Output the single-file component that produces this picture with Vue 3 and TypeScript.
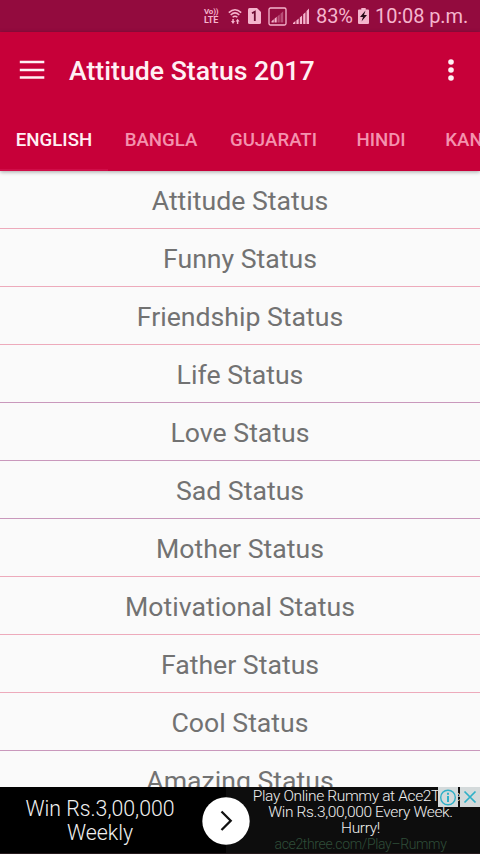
<script setup lang="ts">
interface Row {
  label: string
  tone: 'rose' | 'mauve'
}

const tabs: { label: string; cls: string }[] = [
  { label: 'ENGLISH', cls: 'english' },
  { label: 'BANGLA', cls: 'bangla' },
  { label: 'GUJARATI', cls: 'gujarati' },
  { label: 'HINDI', cls: 'hindi' },
  { label: 'KANNADA', cls: 'kannada' },
]

const rows: Row[] = [
  { label: 'Attitude Status', tone: 'rose' },
  { label: 'Funny Status', tone: 'rose' },
  { label: 'Friendship Status', tone: 'rose' },
  { label: 'Life Status', tone: 'mauve' },
  { label: 'Love Status', tone: 'mauve' },
  { label: 'Sad Status', tone: 'mauve' },
  { label: 'Mother Status', tone: 'rose' },
  { label: 'Motivational Status', tone: 'rose' },
  { label: 'Father Status', tone: 'rose' },
  { label: 'Cool Status', tone: 'mauve' },
  { label: 'Amazing Status', tone: 'rose' },
]
</script>

<template>
  <div class="screen">
    <div class="status-bar">
      <div class="volte"><span class="vo">Vo))</span><span class="lte">LTE</span></div>
      <svg class="wifi" width="14" height="17" viewBox="0 0 14 17" fill="none" stroke="currentColor">
        <path d="M.8 4.600Q7-1.200 13.200 4.600M2.700 7Q7 2.800 11.300 7M4.600 9.300Q7 7.200 9.400 9.300" stroke-width="1.500" />
        <path d="M3 13h1.300v-2h1.500v2H7L5 16zM7.600 13.500L9.600 10.800L11.600 13.500H10.300V16H8.900V13.500z" fill="currentColor" stroke="none" />
      </svg>
      <svg class="sim" width="13" height="16" viewBox="0 0 13 16">
        <path d="M1.500 0H9l4 4v10.500q0 1.500-1.500 1.500h-10Q0 16 0 14.500v-13Q0 0 1.500 0z" fill="currentColor" />
        <path d="M4 5.300l2.800-1.500V13" fill="none" stroke="#6d0d33" stroke-width="1.800" />
      </svg>
      <svg class="boxed" width="19" height="19" viewBox="0 0 19 19">
        <rect x="1" y="1" width="17" height="17" rx="1.500" fill="none" stroke="currentColor" stroke-width="1.300" />
        <path d="M3.500 15.500v-1.200L5.800 12.300v3.200zM6.500 15.500v-3.800L8.700 9.800v5.700z" fill="currentColor" />
        <path d="M9.500 15.500V9.200L11.700 7.400v8.100zM12.500 15.500V6.700L15.200 4.200v11.300z" fill="currentColor" opacity=".4" />
      </svg>
      <svg class="signal" width="16" height="16" viewBox="0 0 16 16" fill="currentColor">
        <path d="M0 16v-1l2.400-2v3zM3.400 16v-3.600L5.700 10.500V16zM6.800 16V9.500L9.100 7.400V16zM10.200 16V6.200L12.500 4.200V16zM13.500 16V3L16 .6V16z" />
      </svg>
      <span class="percent">83%</span>
      <svg class="battery" width="11" height="16" viewBox="0 0 11 16">
        <path d="M3.300 0h4.400v1.500H10q1 0 1 1V15q0 1-1 1H1q-1 0-1-1V2.500q0-1 1-1h2.300z" fill="currentColor" />
        <path d="M7.500 2.500L2 9h3L3.500 13.500L9 7H6z" fill="#260916" />
      </svg>
      <span class="clock">10:08 p.m.</span>
    </div>

    <header class="app-bar">
      <div class="toolbar">
        <svg class="menu" width="26" height="20" viewBox="0 0 26 20">
          <path d="M.8 2h24.500M.8 10h24.500M.8 17.500h24.500" stroke="currentColor" stroke-width="2.600" />
        </svg>
        <h1>Attitude Status 2017</h1>
        <svg class="more" width="6" height="22" viewBox="0 0 6 22" fill="currentColor">
          <circle cx="3" cy="3" r="2.800" /><circle cx="3" cy="11" r="2.800" /><circle cx="3" cy="19" r="2.800" />
        </svg>
      </div>
      <nav class="tabs">
        <div v-for="tab in tabs" :key="tab.label" class="tab" :class="[tab.cls, { active: tab.cls === 'english' }]">
          <span>{{ tab.label }}</span>
        </div>
      </nav>
    </header>

    <main class="list">
      <div v-for="row in rows" :key="row.label" class="row" :class="row.tone">{{ row.label }}</div>
    </main>

    <footer class="ad">
      <div class="headline">Win Rs.3,00,000<br>Weekly</div>
      <svg class="go" width="48" height="48" viewBox="0 0 48 48">
        <circle cx="24" cy="24" r="23.700" fill="#fff" />
        <path d="M19.500 14.500L28.700 23.700L19.500 33" fill="none" stroke="#111" stroke-width="2.300" />
      </svg>
      <div class="copy">
        <span class="l1">Play Online Rummy at Ace2Three</span>
        <span class="l2">Win Rs.3,00,000 Every Week.</span>
        <span class="l3">Hurry!</span>
        <span class="url">ace2three.com/Play–Rummy</span>
      </div>
      <div class="choices">
        <svg width="20" height="20" viewBox="0 0 20 20" fill="none" stroke="#2fb0c7" stroke-width="1.400">
          <circle cx="10" cy="10.500" r="7.300" /><path d="M10 9v6M10 5.800v1.900" stroke-width="2" />
        </svg>
        <svg width="20" height="20" viewBox="0 0 20 20" fill="none" stroke="#2fb0c7" stroke-width="1.700">
          <path d="M4.500 4.500l11 11M15.500 4.500l-11 11" />
        </svg>
      </div>
    </footer>
  </div>
</template>

<style>
body {
  margin: 0;
  overflow: hidden;
}
</style>

<style scoped>
.screen {
  width: 480px;
  height: 854px;
  display: flex;
  flex-direction: column;
  overflow: hidden;
  background: #fafafa;
  font-family: Roboto, "Liberation Sans", sans-serif;
}
.status-bar {
  height: 32px;
  flex: none;
  box-sizing: border-box;
  display: flex;
  align-items: center;
  padding-left: 204px;
  background: #930b3e;
  color: #f5b5cd;
  white-space: nowrap;
}
.status-bar svg {
  flex: none;
}
.volte {
  width: 16px;
  display: flex;
  flex-direction: column;
  font-weight: 700;
}
.vo {
  font-size: 8px;
  line-height: 8px;
  letter-spacing: -0.2px;
}
.lte {
  font-size: 9px;
  line-height: 9px;
  letter-spacing: -0.1px;
}
.wifi {
  margin-left: 8px;
}
.sim {
  margin-left: 6px;
}
.boxed {
  margin-left: 7px;
}
.signal {
  margin-left: 6px;
}
.percent {
  width: 36px;
  margin-left: 7px;
  font-size: 20px;
  letter-spacing: -0.1px;
}
.battery {
  margin-left: 6px;
}
.clock {
  margin-left: 6px;
  font-size: 20px;
  letter-spacing: -0.1px;
}
.app-bar {
  height: 139px;
  flex: none;
  display: flex;
  flex-direction: column;
  position: relative;
  background: #c70039;
  color: #fff0f4;
  box-shadow: 0 1px 4px rgba(0, 0, 0, 0.35);
}
.toolbar {
  height: 75px;
  display: flex;
  align-items: center;
  padding: 0 26px 0 19px;
}
.menu {
  margin-right: 24px;
}
h1 {
  margin: 2px 0 0;
  flex: 1;
  font-size: 26.670px;
  font-weight: 500;
  white-space: nowrap;
}
.tabs {
  flex: 1;
  display: flex;
  overflow: hidden;
}
.tab {
  flex: none;
  display: flex;
  align-items: center;
  justify-content: center;
  box-sizing: border-box;
  padding-top: 4px;
  border-bottom: 2px solid transparent;
  font-size: 18.670px;
  font-weight: 500;
  color: #f492ae;
}
.tab.active {
  color: #fff0f4;
  border-bottom-color: #d00d48;
}
.english { width: 108px; }
.bangla { width: 106px; }
.gujarati { width: 119px; }
.hindi { width: 96px; }
.kannada { width: 120px; }
.list {
  height: 616px;
  flex: none;
  overflow: hidden;
}
.row {
  height: 58px;
  box-sizing: border-box;
  padding-top: 2px;
  border-bottom: 1px solid #edaabb;
  text-align: center;
  font-size: 26.670px;
  line-height: 56px;
  color: #727272;
}
.row.mauve {
  border-bottom-color: #c998bc;
}
.ad {
  height: 67px;
  flex: none;
  box-sizing: border-box;
  display: flex;
  position: relative;
  background: linear-gradient(90deg, #000 0 226px, #0d0d0d 226px);
  border-bottom: 1px solid #251a1d;
  color: #f0f0f0;
  font-weight: 300;
}
.headline {
  width: 200px;
  padding-top: 10px;
  text-align: center;
  font-size: 21.300px;
  line-height: 24px;
}
.go {
  flex: none;
  margin: 10px 0 0 2px;
}
.copy {
  flex: 1;
  display: flex;
  flex-direction: column;
  align-items: center;
  padding-top: 1px;
  padding-right: 9px;
  overflow: hidden;
  font-size: 15.500px;
  line-height: 16px;
  letter-spacing: -0.350px;
  white-space: nowrap;
}
.url {
  font-size: 14px;
  color: #2f4d39;
}
.choices {
  position: absolute;
  top: 0;
  right: 0;
  display: flex;
  gap: 2px;
}
.choices svg {
  background: #d4dadb;
}
</style>
